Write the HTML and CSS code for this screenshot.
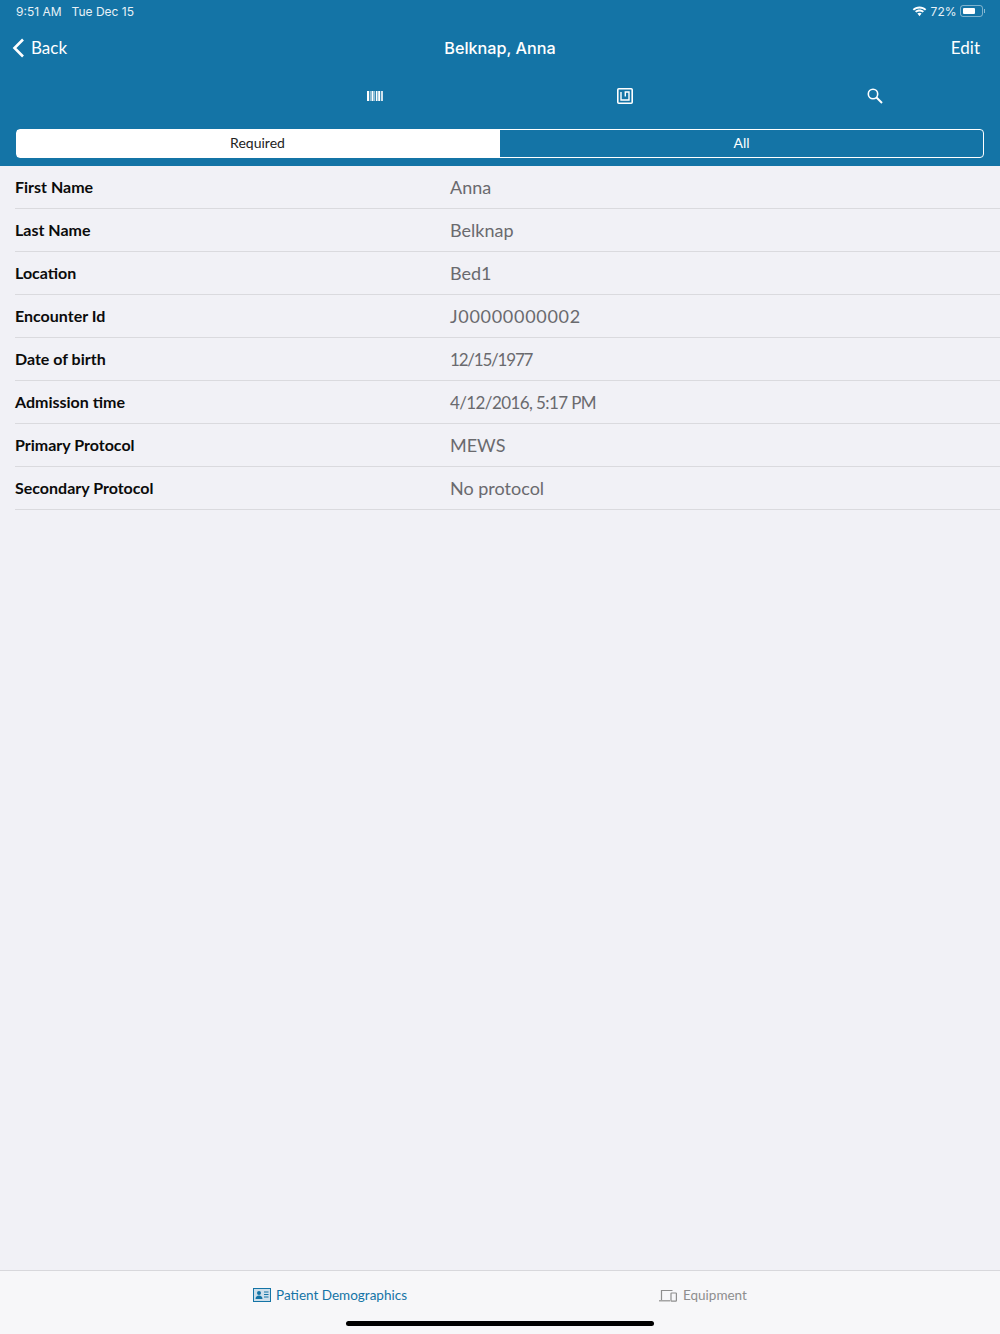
FILE: index.html
```html
<!DOCTYPE html>
<html lang="en">
<head>
  <meta charset="UTF-8">
  <title>Belknap, Anna</title>
  <link rel="stylesheet" href="styles.css">
</head>
<body>

  <!-- Header -->
  <header class="cabecalho">
    <div class="status-bar">
      <span class="status-time">9:51 AM</span>
      <span class="status-date">Tue Dec 15</span>
      <span class="status-right">
        <svg class="wifi" width="15" height="11" viewBox="0 0 15 11" fill="#fff">
          <path d="M7.500 2.400c2.100 0 4 .8 5.500 2.200l1.300-1.400C12.500 1.400 10.100.4 7.500.4S2.500 1.400.7 3.200L2 4.600c1.500-1.400 3.400-2.200 5.500-2.200z"/>
          <path d="M7.500 5.400c1.200 0 2.300.5 3.200 1.200l1.300-1.400C10.800 4.100 9.200 3.500 7.500 3.500S4.200 4.100 3 5.200l1.300 1.400c.9-.7 2-1.200 3.200-1.200z"/>
          <path d="M7.500 6.800c-.8 0-1.500.3-2.100.8l2.100 2.700 2.100-2.700c-.6-.5-1.300-.8-2.100-.8z"/>
        </svg>
        <span>72%</span>
        <span class="battery"><span class="battery-level"></span></span>
        <span class="battery-tip"></span>
      </span>
    </div>

    <div class="nav-bar">
      <a class="nav-back">
        <svg width="13" height="20" viewBox="0 0 13 20"><path d="M11 1.500 2.500 10l8.500 8.500" fill="none" stroke="#fff" stroke-width="2.600"/></svg>
        <span class="nav-text">Back</span>
      </a>
      <strong class="nav-title">Belknap, Anna</strong>
      <a class="nav-text">Edit</a>
    </div>

    <div class="icon-row">
      <div class="icon-cell">
        <svg width="16" height="10" viewBox="0 0 16 10" fill="#fff">
          <rect x="0" width="2" height="10"/><rect x="2.700" width="1" height="10" opacity=".7"/>
          <rect x="4.500" width="2" height="10"/><rect x="7.200" width="1" height="10" opacity=".7"/>
          <rect x="9" width="1.500" height="10"/><rect x="11.200" width="2" height="10"/>
          <rect x="14" width="2" height="10" opacity=".8"/>
        </svg>
      </div>
      <div class="icon-cell">
        <svg width="16" height="16" viewBox="0 0 16 16" fill="none" stroke="#fff">
          <rect x=".8" y=".8" width="14.400" height="14.400" rx="1" stroke-width="1.600"/>
          <path d="M4 4v8h8V4H8.300v4.500" stroke-width="1.400"/>
        </svg>
      </div>
      <div class="icon-cell">
        <svg width="16" height="16" viewBox="0 0 16 16" fill="none" stroke="#fff">
          <circle cx="6" cy="6" r="4.700" stroke-width="1.600"/>
          <path d="M9.500 9.500 15 15" stroke-width="2"/>
        </svg>
      </div>
    </div>

    <div class="segmento">
      <div class="segmento-item ativo">Required</div>
      <div class="segmento-item">All</div>
    </div>
  </header>

  <!-- Demographics list -->
  <main class="lista">
    <div class="linha"><span class="rotulo">First Name</span><span class="valor">Anna</span></div>
    <div class="linha"><span class="rotulo">Last Name</span><span class="valor">Belknap</span></div>
    <div class="linha"><span class="rotulo">Location</span><span class="valor">Bed1</span></div>
    <div class="linha"><span class="rotulo">Encounter Id</span><span class="valor valor-id">J00000000002</span></div>
    <div class="linha"><span class="rotulo">Date of birth</span><span class="valor valor-nasc">12/15/1977</span></div>
    <div class="linha"><span class="rotulo">Admission time</span><span class="valor valor-data">4/12/2016, 5:17 PM</span></div>
    <div class="linha"><span class="rotulo">Primary Protocol</span><span class="valor">MEWS</span></div>
    <div class="linha"><span class="rotulo">Secondary Protocol</span><span class="valor">No protocol</span></div>
  </main>

  <!-- Tab bar -->
  <footer class="tab-bar">
    <div class="tab tab-ativa">
      <svg width="18" height="14" viewBox="0 0 18 14">
        <rect x=".5" y=".5" width="17" height="13" fill="none" stroke="#1474a6"/>
        <rect x="1" y="1" width="16" height="12" fill="#1474a6" opacity=".18"/>
        <circle cx="6" cy="5" r="2" fill="#1474a6"/>
        <path d="M2.500 11c0-2.300 1.500-3.500 3.500-3.500s3.500 1.200 3.500 3.500z" fill="#1474a6"/>
        <path d="M11 4h4.500M11 6.500h4.500M11 9h4.500" stroke="#1474a6" stroke-width="1.200"/>
      </svg>
      Patient Demographics
    </div>
    <div class="tab">
      <svg width="18" height="13" viewBox="0 0 18 13" fill="none" stroke="#8e8e8e" stroke-width="1.200">
        <path d="M2.500 11V1.500h11"/>
        <path d="M0 11.800h11"/>
        <rect x="12" y="4" width="5.400" height="8.200" rx=".6"/>
      </svg>
      Equipment
    </div>
    <div class="home-indicator"></div>
  </footer>

</body>
</html>
```

FILE: styles.css
```css
/* Page */
html, body {
  height: 100%;
}

body {
  margin: 0;
  height: 1334px;
  display: flex;
  flex-direction: column;
  background: #f1f1f6;
  font-family: Lato, "Open Sans", sans-serif;
  color: #111;
  overflow: hidden;
}

/* Header */
.cabecalho {
  background: #1474a6;
  color: #fff;
  height: 166px;
  box-sizing: border-box;
}

.status-bar {
  height: 24px;
  padding: 0 15px 2px 16px;
  box-sizing: border-box;
  display: flex;
  align-items: center;
  font-family: Inter, sans-serif;
  font-size: 12px;
  color: #e8f1f6;
}

.status-date {
  margin-left: 10px;
}

.status-right {
  margin-left: auto;
  display: flex;
  align-items: center;
}

.wifi {
  margin-right: 4px;
}

.battery {
  width: 23px;
  height: 12px;
  margin-left: 3px;
  padding: 2px;
  box-sizing: border-box;
  border: 1px solid rgba(255, 255, 255, 0.45);
  border-radius: 3px;
  display: block;
}

.battery-level {
  display: block;
  width: 72%;
  height: 100%;
  background: #fff;
  border-radius: 1px;
}

.battery-tip {
  width: 1.500px;
  height: 4px;
  margin-left: 1px;
  background: rgba(255, 255, 255, 0.5);
}

.nav-bar {
  height: 48px;
  padding: 0 20px 0 12px;
  display: flex;
  align-items: center;
  justify-content: space-between;
  position: relative;
  font-size: 17px;
}

.nav-back {
  display: flex;
  align-items: center;
  gap: 6px;
}

.nav-text {
  padding-bottom: 2px;
}

.nav-title {
  font-weight: 500;
  font-family: Inter, sans-serif;
  font-size: 16.200px;
  position: absolute;
  left: 0;
  right: 0;
  text-align: center;
}

.icon-row {
  height: 48px;
  padding-left: 250px;
  display: flex;
}

.icon-cell {
  width: 250px;
  display: flex;
  align-items: center;
  justify-content: center;
}

.segmento {
  margin: 9px 16px 0;
  height: 29px;
  display: flex;
  border: 1px solid #fff;
  border-radius: 4px;
  box-sizing: border-box;
  font-size: 14px;
}

.segmento-item {
  width: 50%;
  box-sizing: border-box;
  display: flex;
  align-items: center;
  justify-content: center;
  padding-bottom: 2px;
}

.ativo {
  background: #fff;
  color: #222;
  padding-right: 2px;
}

/* List */
.lista {
  flex: 1;
  padding-left: 15px;
}

.linha {
  height: 43px;
  box-sizing: border-box;
  border-bottom: 1px solid #dadade;
  display: flex;
  align-items: center;
  font-size: 16px;
}

.rotulo {
  width: 435px;
  font-weight: 700;
  color: #0b0b0b;
  padding-bottom: 2px;
}

.valor {
  font-size: 18px;
  color: #6a6a6e;
  padding-bottom: 1px;
}

/* digits in the reference are wider on the id and tighter on dates */
.valor-id {
  letter-spacing: 0.7px;
}

.valor-data {
  font-size: 17px;
  letter-spacing: -0.6px;
  padding-bottom: 0;
}

.valor-nasc {
  font-size: 17px;
  letter-spacing: -1.2px;
  padding-bottom: 0;
}

/* Tab bar */
.tab-bar {
  height: 64px;
  box-sizing: border-box;
  border-top: 1px solid #d8d8dc;
  background: #f7f7f9;
  padding-top: 15px;
  display: flex;
  justify-content: center;
  align-items: flex-start;
  gap: 252px;
  position: relative;
  font-size: 13.500px;
  color: #8e8e8e;
}

.tab {
  display: flex;
  align-items: center;
  gap: 6px;
  height: 18px;
}

.tab-ativa {
  color: #1474a6;
  gap: 5px;
}

.home-indicator {
  position: absolute;
  left: 346px;
  bottom: 8px;
  width: 308px;
  height: 5px;
  border-radius: 3px;
  background: #000;
}
```
